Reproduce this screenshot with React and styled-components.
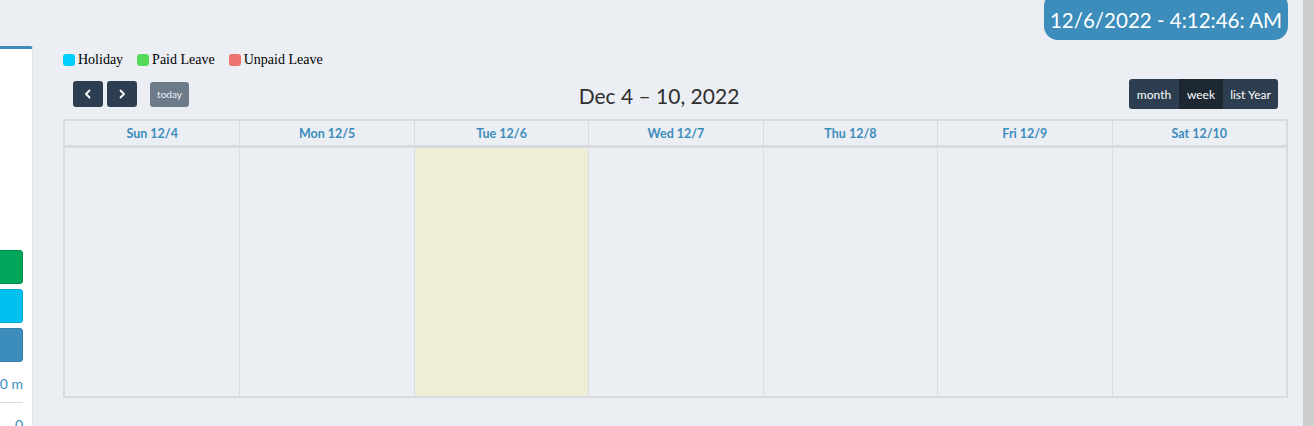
import React from "react";
import styled, { createGlobalStyle } from "styled-components";

const GlobalStyle = createGlobalStyle`
  html, body {
    margin: 0;
    padding: 0;
    background: #ebeef3;
    overflow: hidden;
  }
  body {
    font-family: Lato, "Open Sans", sans-serif;
  }
`;

const Page = styled.div`
  display: flex;
  width: 1314px;
  height: 426px;
  background: #ebeef3;
`;

const SideCard = styled.div`
  width: 33px;
  box-sizing: border-box;
  flex-shrink: 0;
  margin-top: 46px;
  background: #fff;
  border-top: 3px solid #3c8dbc;
  border-right: 1px solid #dfe3e8;
  border-top-right-radius: 3px;
  display: flex;
  justify-content: flex-end;
  align-items: flex-start;
  overflow: hidden;
`;

const SideInner = styled.div`
  flex-shrink: 0;
  width: 200px;
  padding: 201px 9px 0 0;
  display: flex;
  flex-direction: column;
  gap: 5px;

  & > * {
    flex-shrink: 0;
  }
`;

const SideButton = styled.div`
  height: 34px;
  border-radius: 3px;
  background: ${(p) => p.color};
  border: 1px solid ${(p) => p.edge};
  box-sizing: border-box;
`;

const SideText = styled.div`
  margin-top: ${(p) => p.gap}px;
  text-align: right;
  font-size: 14px;
  color: #3c8dbc;
  line-height: 16px;
`;

const SideRule = styled.div`
  margin-top: 5px;
  height: 1px;
  background: #dcdcdc;
`;

const Main = styled.div`
  flex: 1;
  display: flex;
  flex-direction: column;
  padding: 0 15px 0 30px;
`;

const ClockRow = styled.div`
  display: flex;
  justify-content: flex-end;
`;

const Clock = styled.div`
  margin-top: -8px;
  height: 48px;
  width: 244px;
  box-sizing: border-box;
  border-radius: 14px;
  background: #3c8dbc;
  color: #fff;
  font-size: 20.5px;
  display: flex;
  align-items: center;
  justify-content: center;
  padding-top: 8px;
`;

const Legend = styled.div`
  margin-top: 13px;
  display: flex;
  gap: 14px;
  height: 14px;
  align-items: center;
  font-family: "Liberation Serif", serif;
  font-size: 14px;
  color: #000;
`;

const LegendItem = styled.div`
  display: flex;
  align-items: center;
  gap: 3px;
`;

const Swatch = styled.span`
  width: 12px;
  height: 12px;
  border-radius: 3px;
  background: ${(p) => p.color};
`;

const Toolbar = styled.div`
  margin-top: 12px;
  height: 30px;
  display: flex;
  align-items: center;
  justify-content: space-between;
`;

const LeftGroup = styled.div`
  display: flex;
  align-items: center;
  padding-left: 10px;
`;

const NavButton = styled.button`
  width: 30px;
  height: 26px;
  margin-right: 4px;
  border: none;
  border-radius: 3px;
  background: #2c3e50;
  color: #fff;
  display: flex;
  align-items: center;
  justify-content: center;
  padding: 0;
`;

const TodayButton = styled.button`
  margin-left: 9px;
  width: 39px;
  height: 25px;
  border: none;
  border-radius: 3px;
  background: #6c7a89;
  color: #eef0f2;
  font-family: Lato, sans-serif;
  font-size: 10px;
  padding: 0;
`;

const Title = styled.h2`
  margin: 0 0 -2px;
  font-size: 21px;
  font-weight: 400;
  color: #2f2f2f;
`;

const ViewGroup = styled.div`
  display: flex;
  height: 30px;
  border-radius: 3px;
  overflow: hidden;
  margin-right: 10px;
`;

const ViewButton = styled.div`
  display: flex;
  align-items: center;
  justify-content: center;
  width: ${(p) => p.w}px;
  background: ${(p) => (p.active ? "#1e2833" : "#2c3e50")};
  color: #fff;
  font-size: 12px;
  white-space: nowrap;
`;

const Table = styled.div`
  margin-top: 10px;
  height: 279px;
  box-sizing: border-box;
  border: 2px solid #d7dbe1;
  display: grid;
  grid-template-columns: repeat(7, 1fr);
  grid-template-rows: 27px 1fr;
`;

const HeadCell = styled.div`
  display: flex;
  align-items: center;
  justify-content: center;
  font-size: 12.5px;
  font-weight: 700;
  color: #3c8dbc;
  border-left: ${(p) => (p.first ? "none" : "1px solid #d7dbe1")};
  border-bottom: 3px solid #d7dbe1;
`;

const BodyCell = styled.div`
  background: ${(p) => (p.today ? "#efecd7" : "transparent")};
  border-left: ${(p) => (p.first ? "none" : "1px solid #d9dde2")};
`;

const ScrollStrip = styled.div`
  width: 11px;
  flex-shrink: 0;
  background: #cdcdcd;
`;

const days = ["Sun 12/4", "Mon 12/5", "Tue 12/6", "Wed 12/7", "Thu 12/8", "Fri 12/9", "Sat 12/10"];

const Chevron = ({ dir }) => (
  <svg width="10" height="10" viewBox="0 0 10 10">
    <path
      d={dir === "left" ? "M6.5 1.5 L3 5 L6.5 8.5" : "M3.5 1.5 L7 5 L3.5 8.5"}
      stroke="#fff"
      strokeWidth="1.8"
      fill="none"
      strokeLinecap="round"
      strokeLinejoin="round"
    />
  </svg>
);

export default function App() {
  return (
    <>
      <GlobalStyle />
      <Page>
        <SideCard>
          <SideInner>
            <SideButton color="#00a65a" edge="#008d4c" />
            <SideButton color="#00c0ef" edge="#00acd6" />
            <SideButton color="#3c8dbc" edge="#367fa9" />
            <SideText gap={9}>100 m</SideText>
            <SideRule />
            <SideText gap={9}>0</SideText>
          </SideInner>
        </SideCard>
        <Main>
          <ClockRow>
            <Clock>12/6/2022 - 4:12:46: AM</Clock>
          </ClockRow>
          <Legend>
            <LegendItem>
              <Swatch color="#00cfff" />
              Holiday
            </LegendItem>
            <LegendItem>
              <Swatch color="#55db5a" />
              Paid Leave
            </LegendItem>
            <LegendItem>
              <Swatch color="#ee7370" />
              Unpaid Leave
            </LegendItem>
          </Legend>
          <Toolbar>
            <LeftGroup>
              <NavButton>
                <Chevron dir="left" />
              </NavButton>
              <NavButton>
                <Chevron dir="right" />
              </NavButton>
              <TodayButton>today</TodayButton>
            </LeftGroup>
            <Title>Dec 4 – 10, 2022</Title>
            <ViewGroup>
              <ViewButton w={50}>month</ViewButton>
              <ViewButton w={44} active>
                week
              </ViewButton>
              <ViewButton w={55}>list Year</ViewButton>
            </ViewGroup>
          </Toolbar>
          <Table>
            {days.map((d, i) => (
              <HeadCell key={d} first={i === 0}>
                {d}
              </HeadCell>
            ))}
            {days.map((d, i) => (
              <BodyCell key={d} first={i === 0} today={i === 2} />
            ))}
          </Table>
        </Main>
        <ScrollStrip />
      </Page>
    </>
  );
}
